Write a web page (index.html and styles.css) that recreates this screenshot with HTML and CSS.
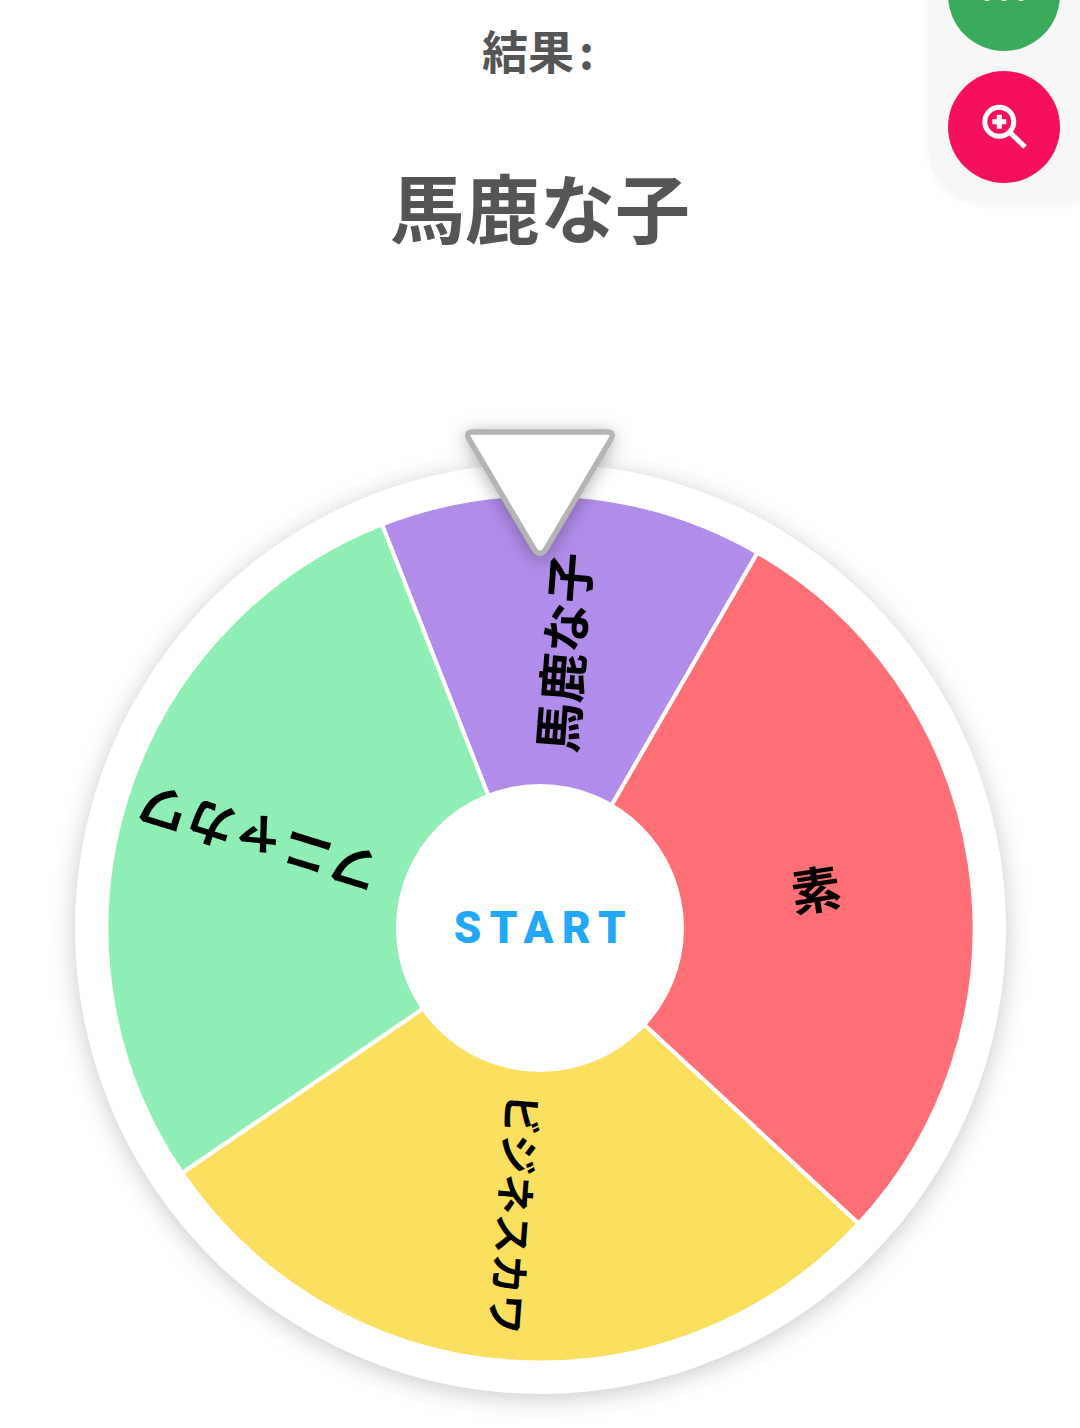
FILE: index.html
```html
<!DOCTYPE html>
<html lang="ja">
<head>
<meta charset="utf-8">
<title>結果</title>
<link rel="stylesheet" href="styles.css">
</head>
<body>
<main class="page">
  <aside class="tools">
    <button class="tool tool-green" aria-label="more">
      <svg class="tool-icon" viewBox="-28 -28 56 56"><circle cx="-17" cy="1" r="5"/><circle cx="0" cy="1" r="5"/><circle cx="17" cy="1" r="5"/></svg>
    </button>
    <button class="tool tool-pink" aria-label="zoom">
      <svg class="tool-icon zoom" viewBox="-28 -28 56 56">
        <circle cx="-4.7" cy="-5.3" r="14.5"/>
        <path d="M6 5.5 21 20"/>
        <path class="plus" d="M-11.7-5.3h14M-4.7-12.3v14"/>
      </svg>
    </button>
  </aside>

  <p class="result-label">結果<span class="colon">:</span></p>
  <h1 class="result-value">馬鹿な子</h1>

  <section class="stage">
    <div class="wheel">
      <svg class="wheel-svg" viewBox="-465.5 -465.5 931 931">
        <path class="seg" fill="#b28cea" d="M0 0L-158.5 -404A434 434 0 0 1 217 -375.85Z"/>
        <path class="seg" fill="#fe6f76" d="M0 0L217 -375.85A434 434 0 0 1 318.2 295.2Z"/>
        <path class="seg" fill="#fbdf5e" d="M0 0L318.2 295.2A434 434 0 0 1 -358.6 244.5Z"/>
        <path class="seg" fill="#8eeeb3" d="M0 0L-358.6 244.5A434 434 0 0 1 -158.5 -404Z"/>
        <text class="seg-label" transform="rotate(-85.7) translate(277 0)">馬鹿な子</text>
        <text class="seg-label" transform="rotate(-8.6) translate(278 0)">素</text>
        <text class="seg-label small" transform="rotate(94.3) translate(287 3)">ビジネスカワ</text>
        <text class="seg-label" transform="rotate(197.1) translate(296 0)">フニャカワ</text>
      </svg>
      <button class="hub">START</button>
    </div>
    <svg class="pointer" viewBox="0 0 156 132">
      <path d="M11 6H145Q153 6 149 13L84 123Q78 132 72 123L7 13Q3 6 11 6Z"/>
    </svg>
  </section>
</main>
</body>
</html>
```
FILE: styles.css
```css
* { box-sizing: border-box; }
html, body { margin: 0; padding: 0; background: #fff; }
body {
  width: 1080px;
  height: 1428px;
  overflow: hidden;
  font-family: "Noto Sans CJK JP", "Noto Sans", sans-serif;
}
.page {
  position: relative;
  display: flex;
  flex-direction: column;
  align-items: center;
  height: 1428px;
}
.result-label {
  margin: 17px 0 0;
  font-size: 46px;
  line-height: 64px;
  font-weight: 700;
  color: #555;
}
.colon { margin-left: 5px; padding-right: 4px; }
.result-value {
  margin: 75px 0 0;
  font-size: 75px;
  line-height: 100px;
  font-weight: 700;
  color: #555;
}
.stage {
  position: relative;
  margin-top: 206.5px;
  width: 931px;
  height: 931px;
}
.wheel {
  position: relative;
  width: 931px;
  height: 931px;
  border-radius: 50%;
  background: #fff;
  box-shadow: 0 4px 24px rgba(0, 0, 0, .22);
}
.wheel-svg { display: block; width: 931px; height: 931px; }
.seg { stroke: #fff; stroke-width: 4; }
.seg-label {
  font-size: 50px;
  font-weight: 700;
  fill: #000;
  text-anchor: middle;
  dominant-baseline: central;
}
.seg-label.small { font-size: 40px; }
.hub {
  position: absolute;
  left: 321.5px;
  top: 321.5px;
  width: 288px;
  height: 288px;
  border: 0;
  border-radius: 50%;
  background: #fff;
  color: #22a8f6;
  font-family: Roboto, sans-serif;
  font-size: 44px;
  font-weight: 900;
  letter-spacing: 8.5px;
  padding: 0 0 0 8px;
}
.pointer {
  position: absolute;
  left: 387.5px;
  top: -36.5px;
  width: 156px;
  height: 132px;
  overflow: visible;
  filter: drop-shadow(0 3px 9px rgba(0, 0, 0, .3));
}
.pointer path {
  fill: #fff;
  stroke: #b4b4b4;
  stroke-width: 5.5;
  stroke-linejoin: round;
}
.tools {
  position: absolute;
  right: 0;
  top: -81px;
  display: flex;
  flex-direction: column;
  gap: 20px;
  padding: 20px 20px 19px 19px;
  background: #f7f7f8;
  border-bottom-left-radius: 52px;
  box-shadow: 0 2px 8px rgba(0, 0, 0, .04);
  z-index: 2;
}
.tool {
  display: flex;
  align-items: center;
  justify-content: center;
  width: 112px;
  height: 112px;
  padding: 0;
  border: 0;
  border-radius: 50%;
}
.tool-green { background: #3aaa5b; }
.tool-pink { background: #f50f5f; }
.tool-icon { display: block; width: 56px; height: 56px; fill: #fff; }
.zoom { fill: none; stroke: #fff; stroke-width: 5; }
.zoom .plus { stroke-width: 5; }
```
